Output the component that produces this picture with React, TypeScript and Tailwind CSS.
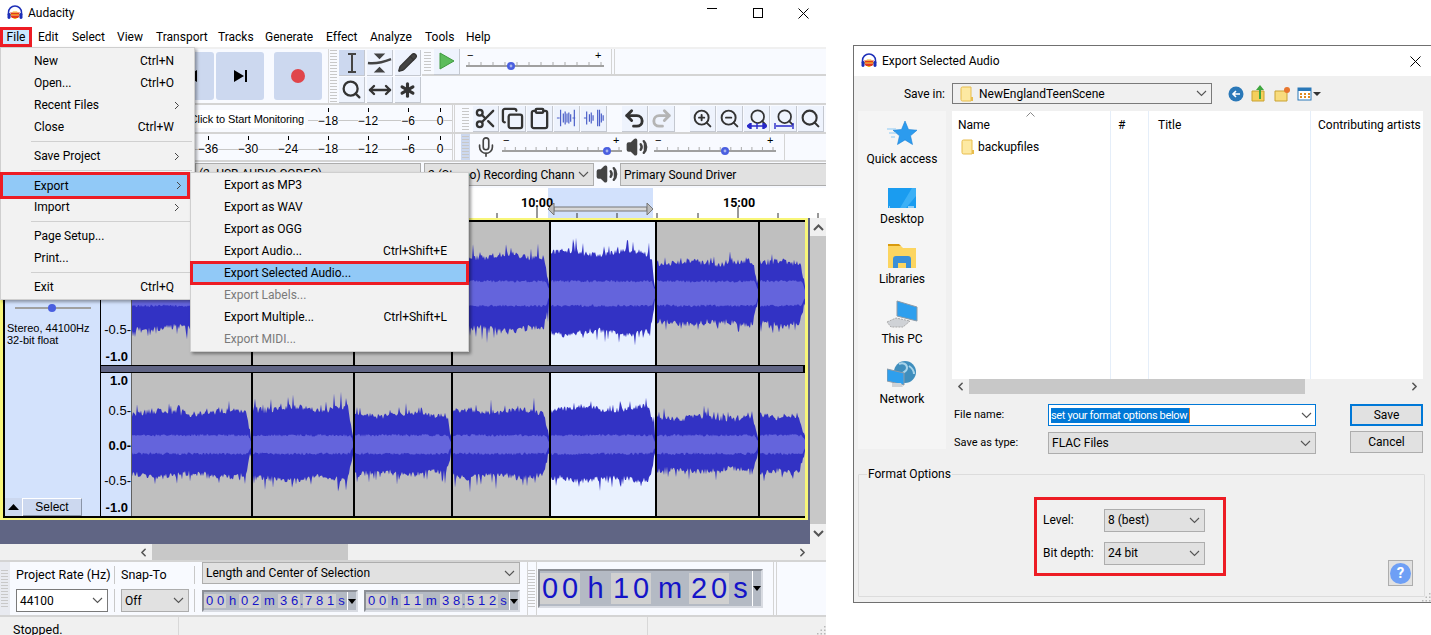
import { Clipboard, Copy, MoveHorizontal, Redo2, Scissors, Search, Undo2, ZoomIn, ZoomOut, ChevronLeft, ChevronRight, Pencil, Mic, Volume2, Asterisk } from "lucide-react";
import type { ReactNode } from "react";

const RED = "border-[#ed1c24]";

const menuBar = [
  { label: "Edit", w: "w-[34px]" },
  { label: "Select", w: "w-[45px]" },
  { label: "View", w: "w-[39px]" },
  { label: "Transport", w: "w-[62px]" },
  { label: "Tracks", w: "w-[47px]" },
  { label: "Generate", w: "w-[61px]" },
  { label: "Effect", w: "w-[44px]" },
  { label: "Analyze", w: "w-[55px]" },
  { label: "Tools", w: "w-[41px]" },
  { label: "Help", w: "w-[40px]" },
];

const clips = [
  { w: 119, amp: 29, spike: 10 },
  { w: 100, amp: 33, spike: 14 },
  { w: 96, amp: 27, spike: 10 },
  { w: 96, amp: 30, spike: 18 },
  { w: 104, amp: 33, spike: 13, selected: true },
  { w: 101, amp: 24, spike: 9 },
  { w: 45, amp: 25, spike: 8 },
];

// rough waveform shape, seeded so it stays the same every render
function makeRandom(seed: number) {
  let s = seed;
  return () => {
    s = (s * 16807) % 2147483647;
    return (s & 0xffff) / 0xffff;
  };
}

function wavePath(w: number, h: number, amp: number, spike: number, seed: number) {
  const r = makeRandom(seed);
  const cy = h / 2;
  const top: string[] = [];
  const bottom: string[] = [];
  for (let x = 0; x <= w; x++) {
    const fade = Math.min(1, Math.pow((w - x + 0.5) / 6, 0.8));
    const hump = 1 + 0.06 * Math.sin((x / w) * 11 + seed);
    const up = amp * hump * fade + r() * 6 + (r() > 0.84 ? r() * spike : 0);
    const down = amp * hump * fade * 0.95 + r() * 6 + (r() > 0.84 ? r() * spike : 0);
    top.push(`${x} ${(cy - up).toFixed(1)}`);
    bottom.unshift(`${x} ${(cy + down).toFixed(1)}`);
  }
  return `M${top.join("L")}L${bottom.join("L")}Z`;
}

function rmsPath(w: number, h: number, size: number, seed: number) {
  const r = makeRandom(seed + 77);
  const cy = h / 2;
  const top: string[] = [];
  const bottom: string[] = [];
  for (let x = 0; x <= w; x++) {
    const fade = Math.min(1, (w - x + 1) / 4);
    top.push(`${x} ${(cy - size * fade - r() * 2.5).toFixed(1)}`);
    bottom.unshift(`${x} ${(cy + size * fade + r() * 2.5).toFixed(1)}`);
  }
  return `M${top.join("L")}L${bottom.join("L")}Z`;
}

function Channel({ offset, scale, rms }: { offset: number; scale: number; rms: number }) {
  return (
    <div className="flex gap-[2px] bg-black">
      {clips.map((clip, i) => (
        <div key={i} className={clip.selected ? "bg-[#e9f1fe]" : "bg-[#bfbfbf]"}>
          <svg width={clip.w} height={143} className="block">
            <path d={wavePath(clip.w, 143, clip.amp * scale, clip.spike, 1234 + i * 991 + offset)} fill="#3232c4" />
            <path d={rmsPath(clip.w, 143, rms, 500 + i * 37 + offset)} fill="#6464dc" />
          </svg>
        </div>
      ))}
    </div>
  );
}

function AxisLabels() {
  return (
    <div className="h-[143px] w-[31px] shrink-0 border-r border-[#606060] bg-[#d3e2fc] pt-[1px] text-right font-['Liberation_Sans',sans-serif] text-[13px] leading-[14px] text-black">
      <div className="pr-[3px] font-bold">1.0</div>
      <div className="mt-[16px]">0.5-</div>
      <div className="mt-[21px] font-bold">0.0-</div>
      <div className="mt-[21px]">-0.5-</div>
      <div className="mt-[13px] pr-[3px] font-bold">-1.0</div>
    </div>
  );
}

function Logo({ size = 16 }: { size?: number }) {
  return (
    <svg width={size} height={size} viewBox="0 0 16 16">
      <path d="M1.5 10V7.5a6.5 6.5 0 0 1 13 0V10" fill="none" stroke="#1d2fb8" strokeWidth="1.5" />
      <path d="M2 9h12v1.5H2z" fill="#f09018" />
      <path d="M3 7.5h10L12 9H4zM3 10.5h10L11 13H5z" fill="#e23a1a" />
      <path d="M6 6.5h4l1 1H5zM6 13h4l-1 1H7z" fill="#f5b51e" />
      <rect x="0.5" y="8" width="3" height="6" rx="1.4" fill="#1d2fb8" />
      <rect x="12.5" y="8" width="3" height="6" rx="1.4" fill="#1d2fb8" />
    </svg>
  );
}

function Chevron({ className = "" }: { className?: string }) {
  return (
    <svg width="11" height="7" viewBox="0 0 11 7" className={className}>
      <path d="M1 1l4.5 4.5L10 1" fill="none" stroke="#555" strokeWidth="1.1" />
    </svg>
  );
}

function Arrow() {
  return (
    <svg width="6" height="9" viewBox="0 0 6 9" className="shrink-0">
      <path d="M1 1l3.5 3.5L1 8" fill="none" stroke="#444" strokeWidth="1" />
    </svg>
  );
}

function Grip({ className = "", count = 8 }: { className?: string; count?: number }) {
  return (
    <div className={`flex flex-col justify-center gap-[2px] ${className}`}>
      {Array.from({ length: count }).map((_, i) => (
        <div key={i} className="h-px w-[7px] bg-[#c8c8c8]" />
      ))}
    </div>
  );
}

function ToolButton({ children, active, className = "" }: { children: ReactNode; active?: boolean; className?: string }) {
  return (
    <div
      className={`flex h-[26px] w-[26px] shrink-0 items-center justify-center border-b border-r border-[#c4c8d0] text-[#333] ${active ? "bg-[#ccd8ef]" : "bg-[#eef3fd]"} ${className}`}
    >
      {children}
    </div>
  );
}

function Slider({ w, knob }: { w: number; knob: number }) {
  const ticks = Array.from({ length: 12 }).map((_, i) => 3 + (i * (w - 6)) / 11);
  return (
    <svg width={w} height={24} className="shrink-0">
      <text x="1" y="9" fontSize="11" fontFamily="Liberation Sans" fill="#000">−</text>
      <text x={w - 9} y="9" fontSize="11" fontFamily="Liberation Sans" fill="#000">+</text>
      {ticks.map((x) => (
        <line key={x} x1={x} x2={x} y1="12" y2="15" stroke="#aaa" />
      ))}
      <rect x="0" y="15" width={w} height="2" fill="#a0a0a0" />
      <circle cx={knob} cy="16" r="4" fill="#4a5fe0" />
      <circle cx={knob} cy="16" r="1.4" fill="#a8b4ee" />
    </svg>
  );
}

function MeterTick({ label, className = "w-[40px]" }: { label: string; className?: string }) {
  return (
    <div className={`flex shrink-0 flex-col items-center ${className}`}>
      <div className="h-[4px] w-px bg-black" />
      <div className="flex w-full items-center">
        <span className="h-px flex-1 bg-[#c8c8c8]" />
        <span className="font-['Liberation_Sans',sans-serif] text-[12px] leading-[18px]">{label}</span>
        <span className="h-px flex-1 bg-[#c8c8c8]" />
      </div>
    </div>
  );
}

function Combo({ children, className = "", white }: { children: ReactNode; className?: string; white?: boolean }) {
  return (
    <div
      className={`flex items-center justify-between overflow-hidden whitespace-nowrap border pl-[3px] pr-[4px] ${white ? "border-[#7a7a7a] bg-white" : "border-[#adadad] bg-[#e1e1e1]"} ${className}`}
    >
      <span>{children}</span>
      <Chevron className="shrink-0" />
    </div>
  );
}

type Seg = { t: string; dark?: boolean; w: string };

function TimeField({ segs, cell, className = "" }: { segs: Seg[]; cell: string; className?: string }) {
  return (
    <div className={`flex items-stretch border-2 border-[#8c8f96] border-b-[#d8dbe2] border-r-[#d8dbe2] bg-[#b4bac4] font-['Liberation_Sans',sans-serif] text-[#1414c8] ${className}`}>
      {segs.map((s, i) => (
        <div key={i} className={`my-[2px] flex items-center justify-center ${s.w} ${s.dark ? "bg-[#b4bac4]" : "bg-[#d0d0d0]"}`}>
          {s.t.split("").map((c, j) => (
            <span key={j} className={`text-center ${s.dark || c === "." ? "" : cell}`}>
              {c}
            </span>
          ))}
        </div>
      ))}
      <div className="flex w-[9px] items-center justify-center border-l border-white">
        <svg width="8" height="5" viewBox="0 0 8 5">
          <path d="M0 0h8L4 5z" fill="#000" />
        </svg>
      </div>
    </div>
  );
}

function ResizeGrip({ className = "" }: { className?: string }) {
  return (
    <svg width="10" height="10" viewBox="0 0 10 10" className={className}>
      <path d="M8 1h1.5v1.5H8zM8 4.5h1.5V6H8zM4.5 4.5H6V6H4.5zM8 8h1.5v1.5H8zM4.5 8H6v1.5H4.5zM1 8h1.5v1.5H1z" fill="#b8b8b8" />
    </svg>
  );
}

function TrackPanel() {
  return (
    <div className="flex h-[294px] w-[95px] shrink-0 flex-col justify-end bg-[#d3e2fc] font-['Liberation_Sans',sans-serif] text-black">
      <div className="mb-[10px] ml-[10px]">
        <svg width="76" height="8" className="block">
          <rect y="3" width="76" height="2" fill="#a0a0a0" />
          <circle cx="37" cy="4" r="4" fill="#4a5fe0" />
        </svg>
      </div>
      <div className="ml-[2px] text-[11px] leading-[12px]">
        Stereo, 44100Hz
        <br />
        32-bit float
      </div>
      <div className="mt-[152px] flex h-[18px] text-[12px]">
        <div className="flex w-[18px] items-center justify-center border-r border-white bg-[#ccd8ef]">
          <svg width="11" height="6" viewBox="0 0 11 6"><path d="M0 6h11L5.5 0z" fill="#000" /></svg>
        </div>
        <div className="flex w-[59px] items-center justify-center border-b border-r border-t border-[#8a95a8] border-t-white bg-[#ccd8ef]">Select</div>
      </div>
    </div>
  );
}

const fileMenu: (string | [string, string?, boolean?])[] = [
  ["New", "Ctrl+N"],
  ["Open...", "Ctrl+O"],
  ["Recent Files", "", true],
  ["Close", "Ctrl+W"],
  "sep",
  ["Save Project", "", true],
  "sep",
];
const fileMenu2: (string | [string, string?, boolean?])[] = [
  ["Import", "", true],
  "sep",
  ["Page Setup..."],
  ["Print..."],
  "sep",
  ["Exit", "Ctrl+Q"],
];

function FileMenuRows({ rows }: { rows: (string | [string, string?, boolean?])[] }) {
  return (
    <>
      {rows.map((row, i) =>
        typeof row === "string" ? (
          <div key={i} className="my-[3px] ml-[30px] mr-[2px] h-px bg-[#d0d0d0]" />
        ) : (
          <div key={i} className="flex h-[22px] items-center justify-between pl-[33px] pr-[14px]">
            <span>{row[0]}</span>
            {row[2] ? <Arrow /> : <span className="pr-[6px]">{row[1]}</span>}
          </div>
        )
      )}
    </>
  );
}

function SubRow({ label, keys, disabled }: { label: string; keys?: string; disabled?: boolean }) {
  return (
    <div className={`flex h-[22px] items-center justify-between pl-[33px] pr-[21px] ${disabled ? "text-[#7a7a7a]" : ""}`}>
      <span>{label}</span>
      {keys && <span>{keys}</span>}
    </div>
  );
}

function Menus() {
  return (
    <>
      <div className="absolute left-0 top-[47px] h-[253px] w-[195px] border border-[#cfcfcf] bg-[#f2f2f2] pt-[2px] shadow-[2px_2px_3px_rgba(0,0,0,0.35)]">
        <FileMenuRows rows={fileMenu} />
        <div className={`-mb-[3px] -ml-px -mt-[2px] flex h-[27px] w-[190px] items-center justify-between border-[3px] ${RED} bg-[#91c9f7] pl-[31px] pr-[5px]`}>
          <span>Export</span>
          <Arrow />
        </div>
        <FileMenuRows rows={fileMenu2} />
      </div>
      <div className="absolute left-[190px] top-[172px] h-[180px] w-[279px] border border-[#cfcfcf] bg-[#f2f2f2] pt-[1px] shadow-[2px_2px_3px_rgba(0,0,0,0.4)]">
        <SubRow label="Export as MP3" />
        <SubRow label="Export as WAV" />
        <SubRow label="Export as OGG" />
        <SubRow label="Export Audio..." keys="Ctrl+Shift+E" />
        <div className={`-mx-px -my-px flex h-[24px] items-center border-[3px] ${RED} bg-[#91c9f7] pl-[31px]`}>Export Selected Audio...</div>
        <SubRow label="Export Labels..." disabled />
        <SubRow label="Export Multiple..." keys="Ctrl+Shift+L" />
        <SubRow label="Export MIDI..." disabled />
      </div>
    </>
  );
}

function TrimIcon({ flip }: { flip?: boolean }) {
  const d = flip ? "M1 12h3M4 5v14M7 8v8M9 6v12M11 9v6M16 3v18M18 3v18M20 7v10M22 9v6" : "M1 12h3M5 3v18M8 7v10M10 5v14M12 7v10M14 6v12M16 8v8M18 12h3M20 3v18";
  return (
    <svg width="22" height="22" viewBox="0 0 24 24">
      <path d={d} stroke="#4a5ec8" strokeWidth="1.3" fill="none" />
    </svg>
  );
}

function FitIcon({ bar }: { bar?: boolean }) {
  return (
    <div className="flex flex-col items-center">
      <Search size={19} strokeWidth={2.2} className="-mb-[4px] ml-[3px]" />
      <svg width="20" height="6" viewBox="0 0 20 6">
        <path d={bar ? "M1 0v6M19 0v6M2 3h16" : "M0 3l4-3v6zM20 3l-4-3v6zM4 3h12M10 0v6"} stroke="#2828c8" strokeWidth="1.4" fill="#2828c8" />
      </svg>
    </div>
  );
}

function Toolbars() {
  return (
    <div className="h-[141px] bg-[#f8faff]">
      <div className="flex h-[58px] border-b-2 border-t-2 border-[#f0f0f0] border-b-[#d4d4d4]">
        <div className="flex w-[328px] shrink-0 items-center justify-end pr-[6px]">
          <div className="mr-[2px] flex h-[48px] w-[48px] items-center justify-center rounded-[3px] bg-[#ccd8ef]">
            <svg width="13" height="12" viewBox="0 0 13 12"><path d="M0 0h2v12H0zM13 0v12L3 6z" fill="#000" /></svg>
          </div>
          <div className="mr-[10px] flex h-[48px] w-[48px] items-center justify-center rounded-[3px] bg-[#ccd8ef]">
            <svg width="13" height="12" viewBox="0 0 13 12"><path d="M11 0h2v12h-2zM0 0v12l10-6z" fill="#000" /></svg>
          </div>
          <div className="flex h-[48px] w-[48px] items-center justify-center rounded-[3px] bg-[#ccd8ef]">
            <div className="h-[14px] w-[14px] rounded-full bg-[#e0454a]" />
          </div>
        </div>
        <Grip count={18} className="w-[10px] shrink-0 border-l border-[#d8d8d8] pl-[1px]" />
        <div className="grid w-[84px] shrink-0 grid-cols-3 gap-[1px] py-[1px] pl-[1px]">
          <ToolButton active>
            <svg width="14" height="20" viewBox="0 0 14 20"><path d="M3 1h8M7 1v18M3 19h8" stroke="#444" strokeWidth="2" fill="none" /></svg>
          </ToolButton>
          <ToolButton>
            <svg width="26" height="22" viewBox="0 0 26 22"><path d="M7 1h12l-6 6zM7 21h12l-6-6z" fill="#444" /><path d="M1 11c8 1 14 0 24-4" stroke="#444" strokeWidth="2.4" fill="none" /></svg>
          </ToolButton>
          <ToolButton>
            <Pencil size={21} fill="#444" strokeWidth={1.5} />
          </ToolButton>
          <ToolButton>
            <Search size={21} strokeWidth={2.6} />
          </ToolButton>
          <ToolButton>
            <MoveHorizontal size={24} strokeWidth={2.4} />
          </ToolButton>
          <ToolButton>
            <Asterisk size={26} strokeWidth={3} />
          </ToolButton>
        </div>
        <div className="flex min-w-0 flex-1 flex-col">
          <div className="flex h-[27px] items-center border-b-2 border-[#d4d4d4] pl-[2px]">
            <Grip count={7} className="w-[10px] shrink-0" />
            <div className="flex h-[26px] w-[26px] items-center justify-center border-b border-r border-[#c4c8d0] bg-[#eef3fd]">
              <svg width="16" height="18" viewBox="0 0 16 18"><path d="M1 1l14 8-14 8z" fill="#5cbc5c" stroke="#3f9a3f" /></svg>
            </div>
            <div className="ml-[6px]">
              <Slider w={138} knob={45} />
            </div>
            <div className="ml-[7px] h-full w-[4px] border-x border-[#d4d4d4]" />
          </div>
        </div>
      </div>
      <div className="flex h-[83px]">
        <div className="w-[452px] shrink-0">
          <div className="flex h-[27px] items-center justify-end">
            <span className="mr-[3px] whitespace-nowrap bg-white px-[1px] font-['Liberation_Sans',sans-serif] text-[11px] leading-[18px] tracking-[-0.1px]">Click to Start Monitoring</span>
            <MeterTick label="−18" />
            <MeterTick label="−12" />
            <MeterTick label="−6" />
            <MeterTick label="0" className="w-[24px]" />
          </div>
          <div className="flex h-[28px] items-center justify-end border-t-2 border-[#d4d4d4]">
            <MeterTick label="−36" />
            <MeterTick label="−30" />
            <MeterTick label="−24" />
            <MeterTick label="−18" />
            <MeterTick label="−12" />
            <MeterTick label="−6" />
            <MeterTick label="0" className="w-[24px]" />
          </div>
          <div className="flex h-[28px] border-t-2 border-[#d4d4d4] pl-[195px] pt-[1px]">
            <div className="h-[23px] w-[226px] overflow-hidden whitespace-nowrap border border-[#adadad] bg-[#e1e1e1] px-[3px] leading-[21px]">(2- USB AUDIO CODEC)</div>
          </div>
        </div>
        <div className="min-w-0 flex-1">
          <div className="flex h-[27px] items-center">
            <div className="h-full w-[3px] border-x border-[#d4d4d4]" />
            <Grip className="ml-[7px] w-[11px] shrink-0" />
            <div className="flex gap-[1px]">
              <ToolButton><Scissors size={23} strokeWidth={2.4} /></ToolButton>
              <ToolButton><Copy size={23} strokeWidth={2.4} /></ToolButton>
              <ToolButton><Clipboard size={23} strokeWidth={2.4} /></ToolButton>
              <ToolButton><TrimIcon /></ToolButton>
              <ToolButton><TrimIcon flip /></ToolButton>
            </div>
            <div className="ml-[15px] flex gap-[1px]">
              <ToolButton><Undo2 size={23} strokeWidth={3} /></ToolButton>
              <ToolButton className="text-[#b4b4b4]"><Redo2 size={23} strokeWidth={3} /></ToolButton>
            </div>
            <div className="ml-[15px] flex gap-[1px]">
              <ToolButton><ZoomIn size={21} strokeWidth={2.2} /></ToolButton>
              <ToolButton><ZoomOut size={21} strokeWidth={2.2} /></ToolButton>
              <ToolButton><FitIcon /></ToolButton>
              <ToolButton><FitIcon bar /></ToolButton>
              <ToolButton><Search size={21} strokeWidth={2.4} /></ToolButton>
            </div>
          </div>
          <div className="flex h-[28px] items-center border-t-2 border-[#d4d4d4]">
            <div className="h-full w-[3px] border-x border-[#d4d4d4]" />
            <div className="ml-[6px] flex h-full w-[9px] shrink-0 items-center justify-center bg-[#ccd8ef]"><Grip /></div>
            <Mic size={22} strokeWidth={1.8} className="ml-[5px] text-[#444]" />
            <div className="ml-[5px]"><Slider w={120} knob={105} /></div>
            <Volume2 size={22} strokeWidth={2.6} fill="#444" className="ml-[4px] text-[#444]" />
            <div className="ml-[6px]"><Slider w={122} knob={71} /></div>
            <div className="ml-[8px] h-full w-px bg-[#d4d4d4]" />
          </div>
          <div className="flex h-[28px] items-start border-t-2 border-[#d4d4d4] pt-[1px]">
            <Combo className="ml-[-28px] h-[23px] w-[170px] shrink-0">2 (Stereo) Recording Chann</Combo>
            <Volume2 size={22} strokeWidth={2.6} fill="#444" className="mx-[2px] shrink-0 text-[#444]" />
            <div className="flex h-[23px] flex-1 items-center border border-r-0 border-[#adadad] bg-[#e1e1e1] pl-[3px]">Primary Sound Driver</div>
          </div>
        </div>
      </div>
    </div>
  );
}

function Timeline() {
  const ticks = [497, 537, 577, 617, 657, 698, 738, 778, 818];
  return (
    <div className="relative h-[30px] bg-white">
      <div className="absolute left-[548px] top-0 h-full w-[105px] bg-[#d2e1fc]" />
      <span className="absolute left-[521px] top-[7px] text-[12.5px] font-bold leading-[16px]">10:00</span>
      <span className="absolute left-[723px] top-[7px] text-[12.5px] font-bold leading-[16px]">15:00</span>
      <svg width="826" height="30" className="absolute left-0 top-0">
        {ticks.map((x) => (
          <line key={x} x1={x} x2={x} y1={x === 537 || x === 738 ? 19 : 25} y2="30" stroke="#333" />
        ))}
        <path d="M554 19h93v4h-93z" fill="#d8d8d8" stroke="#777" />
        <path d="M548 21l6-6v12zM653 21l-6-6v12z" fill="#bbb" stroke="#777" />
      </svg>
    </div>
  );
}

function TrackArea() {
  return (
    <div className="flex h-[326px]">
      <div className="w-[810px] shrink-0 bg-[#606584]">
        <div className="h-[302px] w-[808px] border-x-[3px] border-y-[2px] border-[#f8f67a]">
          <div className="flex h-full flex-col border-2 border-t-0 border-black bg-[#606584]">
            <div className="flex bg-black pt-[2px]">
              <div className="w-[96px] shrink-0 border-r border-black">
                <TrackPanel />
              </div>
              <div className="min-w-0 flex-1">
                <div className="flex">
                  <AxisLabels />
                  <Channel offset={17} scale={1.15} rms={11} />
                </div>
                <div className="h-[8px] border-y border-black bg-[#606584]" />
                <div className="flex">
                  <AxisLabels />
                  <Channel offset={53} scale={1} rms={8} />
                </div>
              </div>
            </div>
          </div>
        </div>
      </div>
      <div className="flex w-[16px] flex-col items-center bg-[#f0f0f0] text-[#555]">
        <svg width="11" height="18" viewBox="0 0 11 18" className="shrink-0"><path d="M1 12l4.5-4.5L10 12" fill="none" stroke="#555" strokeWidth="2" /></svg>
        <div className="h-[288px] w-full bg-[#c8c8c8]" />
        <div className="mt-[6px]"><svg width="11" height="7" viewBox="0 0 11 7"><path d="M1 1l4.5 4.5L10 1" fill="none" stroke="#555" strokeWidth="2" /></svg></div>
      </div>
    </div>
  );
}

function SelectionBar() {
  return (
    <div className="flex h-[57px] border-y-2 border-[#d4d4d4] bg-[#f8faff]">
      <Grip count={13} className="w-[10px] shrink-0 bg-[#e8eaf0] pl-[1px]" />
      <div className="w-[104px] shrink-0 pl-[6px]">
        <div className="flex h-[26px] items-center whitespace-nowrap text-[12.5px]">Project Rate (Hz)</div>
        <Combo white className="mt-[1px] h-[23px] w-[92px]">44100</Combo>
      </div>
      <div className="w-[81px] shrink-0">
        <div className="mt-[4px] flex h-[18px] items-center whitespace-nowrap border-x border-[#c8c8c8] pl-[6px] text-[12.5px]">Snap-To</div>
        <div className="mt-[5px] flex items-center border-x border-[#c8c8c8] pl-[6px]">
          <Combo className="h-[23px] w-[68px]">Off</Combo>
        </div>
      </div>
      <div className="ml-[7px] flex w-[318px] shrink-0 flex-col">
        <Combo className="h-[22px] w-[318px]">Length and Center of Selection</Combo>
        <div className="mt-[6px] flex justify-between text-[13px]">
          <TimeField
            className="h-[22px]"
            cell="w-[11px]"
            segs={[
              { t: "00", w: "w-[22px]" },
              { t: "h", dark: true, w: "w-[13px]" },
              { t: "02", w: "w-[22px]" },
              { t: "m", dark: true, w: "w-[17px]" },
              { t: "36", w: "w-[22px]" },
              { t: ".", dark: true, w: "w-[3px]" },
              { t: "781", w: "w-[33px]" },
              { t: "s", dark: true, w: "w-[11px]" },
            ]}
          />
          <TimeField
            className="h-[22px]"
            cell="w-[11px]"
            segs={[
              { t: "00", w: "w-[22px]" },
              { t: "h", dark: true, w: "w-[13px]" },
              { t: "11", w: "w-[22px]" },
              { t: "m", dark: true, w: "w-[17px]" },
              { t: "38", w: "w-[22px]" },
              { t: ".", dark: true, w: "w-[3px]" },
              { t: "512", w: "w-[33px]" },
              { t: "s", dark: true, w: "w-[11px]" },
            ]}
          />
        </div>
      </div>
      <div className="ml-[7px] w-[10px] shrink-0 border-x border-[#d4d4d4]">
        <Grip count={13} className="h-full" />
      </div>
      <div className="ml-[1px] flex items-center">
        <TimeField
          className="h-[39px] text-[29px]"
          cell="w-[20px]"
          segs={[
            { t: "00", w: "w-[40px]" },
            { t: "h", dark: true, w: "w-[31px]" },
            { t: "10", w: "w-[40px]" },
            { t: "m", dark: true, w: "w-[38px]" },
            { t: "20", w: "w-[40px]" },
            { t: "s", dark: true, w: "w-[23px]" },
          ]}
        />
      </div>
      <div className="ml-[10px] w-[4px] border-x border-[#d4d4d4]" />
    </div>
  );
}

function AudacityWindow() {
  return (
    <div className="relative h-[635px] w-[826px] shrink-0 bg-white">
      <div className="flex h-[27px] items-center pb-[1px] pl-[7px]">
        <Logo />
        <span className="ml-[5px]">Audacity</span>
        <div className="ml-auto mr-[1px] flex">
          <div className="flex w-[46px] justify-center">
            <div className="h-px w-[10px] bg-black" />
          </div>
          <div className="flex w-[46px] justify-center">
            <div className="h-[10px] w-[10px] border border-black" />
          </div>
          <div className="flex w-[44px] justify-center">
            <svg width="11" height="11"><path d="M.5.5l10 10M10.5.5l-10 10" stroke="#000" /></svg>
          </div>
        </div>
      </div>
      <div className="flex h-[20px] items-center">
        <div className={`mr-[6px] flex h-[20px] w-[32px] items-center justify-center border-[3px] ${RED} bg-[#cce8ff]`}>File</div>
        {menuBar.map((m) => (
          <span key={m.label} className={m.w}>{m.label}</span>
        ))}
      </div>
      <Toolbars />
      <Timeline />
      <TrackArea />
      <div className="flex h-[16px] items-center bg-[#f0f0f0]">
        <ChevronLeft size={13} strokeWidth={3} className="ml-[137px] text-[#555]" />
        <div className="ml-[2px] h-full w-[196px] bg-[#c8c8c8]" />
        <ChevronRight size={13} strokeWidth={3} className="ml-auto mr-[17px] text-[#555]" />
      </div>
      <SelectionBar />
      <div className="flex h-[18px] items-center bg-[#f0f0f0] text-[12.5px]">
        <div className="flex h-full w-[179px] items-center border-r border-[#d8d8d8] pl-[13px]">
          <span className="pt-[8px]">Stopped.</span>
        </div>
        <div className="ml-[468px] h-full w-px bg-[#d8d8d8]" />
      </div>
      <ResizeGrip className="absolute bottom-0 right-0" />
      <Menus />
    </div>
  );
}

function FolderSmall({ className = "" }: { className?: string }) {
  return (
    <svg width="14" height="16" viewBox="0 0 14 16" className={className}>
      <path d="M1 2.5A1.5 1.5 0 0 1 2.5 1H11v14H2.5A1.5 1.5 0 0 1 1 13.5z" fill="#fde9a2" stroke="#e8bd4d" />
      <path d="M11 11h2v4h-2z" fill="#e8bd4d" />
    </svg>
  );
}

function PlaceItem({ icon, label }: { icon: ReactNode; label: string }) {
  return (
    <div className="flex h-[60px] flex-col items-center">
      <div className="flex h-[37px] items-end justify-center">{icon}</div>
      <div className="flex h-[21px] items-center whitespace-nowrap">{label}</div>
    </div>
  );
}

function Places() {
  return (
    <div className="h-[338px] w-[88px] shrink-0 bg-[#f5f5f5]">
      <PlaceItem
        label="Quick access"
        icon={
          <svg width="32" height="28" viewBox="0 0 32 28">
            <path d="M19 1l3.5 8.5 8.5.7-6.5 5.6 2 8.7-7.5-4.6-7.5 4.6 2-8.7-6.5-5.6 8.5-.7z" fill="#2c9bee" stroke="#1b82d6" strokeWidth="0.6" />
            <path d="M1 9h9M3 13h7M5 17h4" stroke="#8ccaf5" strokeWidth="1.2" />
          </svg>
        }
      />
      <PlaceItem
        label="Desktop"
        icon={
          <svg width="28" height="20" viewBox="0 0 28 20">
            <rect width="28" height="20" fill="#1a9cf0" />
            <path d="M12 20L24 0h4v8L18 20z" fill="#3cb0f6" />
            <path d="M1 19h1M20 19h6" stroke="#fff" />
          </svg>
        }
      />
      <PlaceItem
        label="Libraries"
        icon={
          <svg width="28" height="24" viewBox="0 0 28 24">
            <path d="M0 0h11l2 2h-13z" fill="#d99a0e" />
            <path d="M0 2h13l2 2h13v20H0z" fill="#fcd560" />
            <path d="M5 24v-9a3 3 0 0 1 3-3h12a3 3 0 0 1 3 3v9h-5v-5h-8v5z" fill="#3a8fd8" />
          </svg>
        }
      />
      <PlaceItem
        label="This PC"
        icon={
          <svg width="32" height="28" viewBox="0 0 32 28">
            <path d="M11 1l20 6v14L11 16z" fill="#2e9fee" stroke="#8d9aa6" />
            <path d="M1 22l9-4 14 3-7 6H5z" fill="#cfd2d6" stroke="#aaa" strokeDasharray="2 1" />
          </svg>
        }
      />
      <PlaceItem
        label="Network"
        icon={
          <svg width="30" height="28" viewBox="0 0 30 28">
            <circle cx="18" cy="12" r="11" fill="#3f8ebd" />
            <path d="M12 4c4-2 8 0 8 4s-5 4-6 7M22 6c3 2 5 5 5 8" stroke="#a8d4ea" strokeWidth="2" fill="none" />
            <path d="M0 9l17 4v12L0 21z" fill="#2e9fee" stroke="#8d9aa6" />
            <path d="M5 23h9l2 4H5z" fill="#cfd2d6" />
          </svg>
        }
      />
    </div>
  );
}

function FileList() {
  const col = "h-full shrink-0 border-r border-[#e5eef9] pt-[5px]";
  return (
    <div className="flex h-[268px] overflow-hidden bg-white">
      <div className={`${col} w-[159px] pl-[6px]`}>
        <div className="-mt-[4px] flex h-[4px] justify-center pr-[8px]">
          <svg width="9" height="5" viewBox="0 0 9 5"><path d="M.5 4.5l4-4 4 4" fill="none" stroke="#888" /></svg>
        </div>
        <div className="mt-[1px] leading-[16px]">Name</div>
        <div className="mt-[4px] flex h-[20px] items-center pl-[3px]">
          <FolderSmall className="shrink-0" />
          <span className="ml-[3px]">backupfiles</span>
        </div>
      </div>
      <div className={`${col} w-[38px] pl-[7px] leading-[16px]`}><div className="mt-[1px]">#</div></div>
      <div className={`${col} w-[162px] pl-[9px] leading-[16px]`}><div className="mt-[1px]">Title</div></div>
      <div className="min-w-0 flex-1 whitespace-nowrap pl-[7px] pt-[6px] leading-[16px]">Contributing artists</div>
    </div>
  );
}

function ExportDialog() {
  return (
    <div className="relative mt-[45px] flex h-[558px] w-[578px] shrink-0 flex-col border border-r-0 border-[#707070] bg-[#f0f0f0]">
      <div className="flex h-[30px] items-center bg-white pl-[7px]">
        <Logo />
        <span className="ml-[5px]">Export Selected Audio</span>
        <svg width="11" height="11" className="ml-auto mr-[10px]"><path d="M.5.5l10 10M10.5.5l-10 10" stroke="#000" /></svg>
      </div>
      <div className="flex h-[35px] items-center">
        <span className="w-[91px] text-right">Save in:</span>
        <div className="ml-[7px] flex h-[21px] w-[260px] items-center justify-between border border-[#7a7a7a] bg-[#f0f0f0] pl-[7px] pr-[4px]">
          <span className="flex items-center gap-[5px]">
            <FolderSmall />
            NewEnglandTeenScene
          </span>
          <Chevron />
        </div>
        <svg width="100" height="20" viewBox="0 0 100 20" className="ml-[16px]">
          <circle cx="8" cy="10" r="7.5" fill="#2a78b8" />
          <path d="M12 10H5M8 7l-3 3 3 3" stroke="#fff" strokeWidth="1.6" fill="none" />
          <path d="M24 7h12v10H24z" fill="#f5cf5a" stroke="#c9a233" />
          <path d="M31 15V6h-3l4-5 4 5h-3v9z" fill="#3ea63e" />
          <path d="M47 7h12v10H47z" fill="#f8dc7d" stroke="#c9a233" />
          <circle cx="59" cy="6" r="3" fill="#e8762e" />
          <rect x="70" y="4" width="13" height="12" fill="#fff" stroke="#2a78b8" />
          <path d="M70 4h13v3H70z" fill="#2a78b8" />
          <path d="M72 9h2v2h-2zM76 9h2v2h-2zM80 9h2v2h-2zM72 12h2v2h-2zM76 12h2v2h-2zM80 12h2v2h-2z" fill="#e08a20" />
          <path d="M85 8h8l-4 4z" fill="#333" />
        </svg>
      </div>
      <div className="flex">
        <div className="ml-[4px]">
          <Places />
        </div>
        <div className="ml-[6px] w-[471px] shrink-0">
          <FileList />
          <div className="flex h-[15px] items-center bg-[#f0f0f0]">
            <ChevronLeft size={13} strokeWidth={3} className="ml-[2px] text-[#555]" />
            <div className="ml-[2px] h-full w-[336px] bg-[#c8c8c8]" />
            <ChevronRight size={13} strokeWidth={3} className="ml-auto mr-[2px] text-[#555]" />
          </div>
          <div className="mt-[10px] flex">
            <div className="w-[398px] shrink-0">
              <div className="flex h-[22px] items-center">
                <span className="w-[96px] pl-[2px] text-[11px]">File name:</span>
                <div className="flex h-[22px] w-[268px] items-center justify-between border border-[#0078d7] bg-white pl-[2px] pr-[3px]">
                  <span className="border-r border-[#e8842c] bg-[#0078d7] pr-[2px] text-[11px] leading-[15px] tracking-[-0.35px] text-white">set your format options below</span>
                  <Chevron />
                </div>
              </div>
              <div className="mt-[6px] flex h-[22px] items-center">
                <span className="w-[96px] pl-[2px] text-[11px]">Save as type:</span>
                <Combo className="h-[22px] w-[268px]">FLAC Files</Combo>
              </div>
            </div>
            <div className="w-[73px]">
              <div className="flex h-[22px] items-center justify-center border-2 border-[#0078d7] bg-[#e1e1e1]">Save</div>
              <div className="mt-[5px] flex h-[22px] items-center justify-center border border-[#adadad] bg-[#e1e1e1]">Cancel</div>
            </div>
          </div>
        </div>
      </div>
      <fieldset className="ml-[4px] mt-[12px] h-[131px] w-[567px] rounded-[1px] border border-[#dcdcdc]">
        <legend className="ml-[8px] px-[1px] leading-[16px]">Format Options</legend>
        <div className="flex h-[114px] pt-[15px]">
          <div className={`ml-[175px] flex h-[79px] w-[192px] flex-col justify-center gap-[10px] border-[3px] ${RED} pl-[6px]`}>
            <div className="flex items-center">
              <span className="w-[61px]">Level:</span>
              <Combo className="h-[23px] w-[101px]">8 (best)</Combo>
            </div>
            <div className="flex items-center">
              <span className="w-[61px]">Bit depth:</span>
              <Combo className="h-[23px] w-[101px]">24 bit</Combo>
            </div>
          </div>
          <div className="mb-[10px] ml-auto mr-[11px] flex h-[26px] w-[25px] items-center justify-center self-end border border-[#adadad] bg-[#e1e1e1]">
            <div className="flex h-[21px] w-[21px] items-center justify-center rounded-full bg-[#6e9ff5] text-[15px] font-bold leading-none text-white">?</div>
          </div>
        </div>
      </fieldset>
      <ResizeGrip className="absolute bottom-0 right-0" />
    </div>
  );
}

export default function App() {
  return (
    <div className="flex h-[635px] w-[1431px] gap-[27px] overflow-hidden bg-white font-['Roboto',sans-serif] text-[12px] text-black">
      <AudacityWindow />
      <ExportDialog />
    </div>
  );
}
